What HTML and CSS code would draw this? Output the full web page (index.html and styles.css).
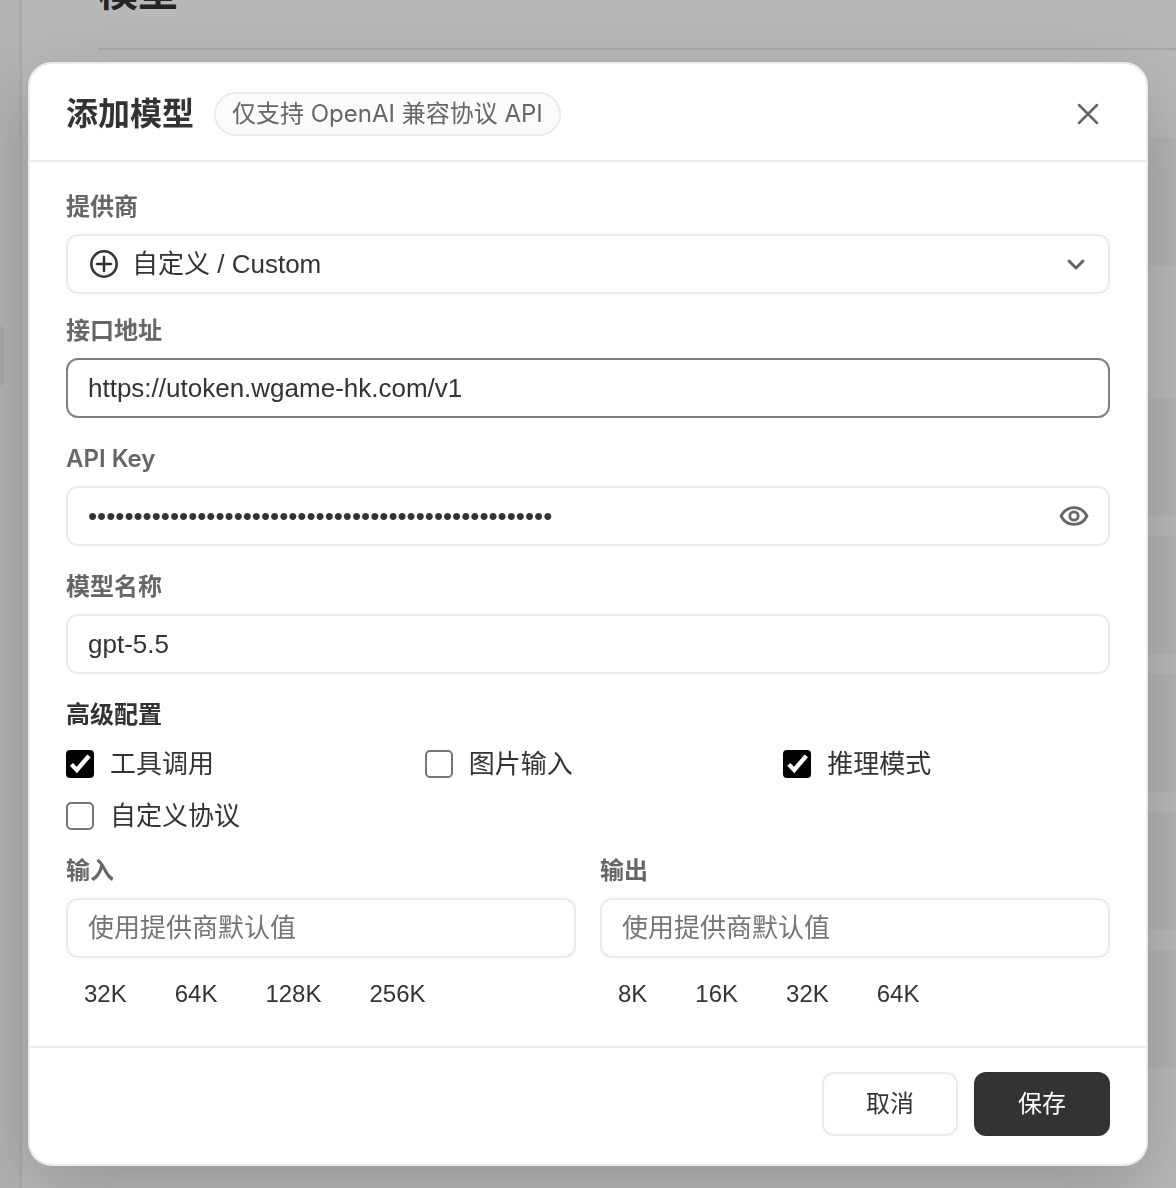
FILE: index.html
```html
<!DOCTYPE html>
<html lang="zh-CN">
<head>
<meta charset="UTF-8" />
<meta name="viewport" content="width=device-width, initial-scale=1.0" />
<title>添加模型</title>
<link rel="stylesheet" href="styles.css">
</head>
<body>

<!-- ------ SETTINGS PAGE (behind the dialog) ------ -->
<div class="app" aria-hidden="true">
  <aside class="sidebar"><span class="sidebar-item"></span></aside>
  <section class="page">
    <header class="page-header"><h1>模型</h1></header>
    <div class="card card-lead"></div>
    <div class="card-list">
      <div class="card"></div>
      <div class="card"></div>
      <div class="card"></div>
      <div class="card"></div>
      <div class="card"></div>
    </div>
  </section>
</div>

<!-- ------ DIALOG ------ -->
<div class="overlay">
  <form class="dialog" role="dialog" aria-modal="true" aria-labelledby="dialogTitle">
    <header class="dialog-header">
      <h2 id="dialogTitle">添加模型</h2>
      <span class="badge">仅支持 OpenAI 兼容协议 API</span>
      <button type="button" class="icon-btn close" aria-label="关闭">
        <svg class="icon" viewBox="0 0 32 32"><path d="M7 7l18 18M25 7l-18 18"/></svg>
      </button>
    </header>

    <div class="dialog-body">
      <div class="field field-provider">
        <label for="provider">提供商</label>
        <div class="control">
          <svg class="icon icon-plus" viewBox="0 0 32 32"><circle cx="16" cy="16" r="12.700"/><path d="M16 9v14M9 16h14"/></svg>
          <select id="provider">
            <option>自定义 / Custom</option>
          </select>
          <svg class="icon icon-chevron" viewBox="0 0 32 32"><path d="M9 13l7 7 7-7"/></svg>
        </div>
      </div>

      <div class="field">
        <label for="baseUrl">接口地址</label>
        <div class="control is-active">
          <input type="text" id="baseUrl" value="https://utoken.wgame-hk.com/v1" spellcheck="false">
        </div>
      </div>

      <div class="field">
        <label for="apiKey">API Key</label>
        <div class="control control-secret">
          <input type="password" id="apiKey" value="sk-000000000000000000000000000000000000000000000000" autocomplete="off">
          <button type="button" class="icon-btn" aria-label="显示 API Key">
            <svg class="icon icon-eye" viewBox="0 0 32 32"><path d="M3 16C6 10.300 10.500 7.600 16 7.600S26 10.300 29 16C26 21.700 21.500 24.400 16 24.400S6 21.700 3 16Z"/><circle cx="16" cy="16" r="4.200"/></svg>
          </button>
        </div>
      </div>

      <div class="field">
        <label for="modelName">模型名称</label>
        <div class="control">
          <input type="text" id="modelName" value="gpt-5.5" spellcheck="false">
        </div>
      </div>

      <fieldset class="advanced">
        <legend>高级配置</legend>
        <div class="checks">
          <label><input type="checkbox" checked> 工具调用</label>
          <label><input type="checkbox"> 图片输入</label>
          <label><input type="checkbox" checked> 推理模式</label>
          <label><input type="checkbox"> 自定义协议</label>
        </div>
      </fieldset>

      <div class="limits">
        <div class="limit">
          <label for="maxInput">输入</label>
          <div class="control">
            <input type="text" id="maxInput" placeholder="使用提供商默认值">
          </div>
          <div class="chips">
            <button type="button">32K</button>
            <button type="button">64K</button>
            <button type="button">128K</button>
            <button type="button">256K</button>
          </div>
        </div>
        <div class="limit">
          <label for="maxOutput">输出</label>
          <div class="control">
            <input type="text" id="maxOutput" placeholder="使用提供商默认值">
          </div>
          <div class="chips">
            <button type="button">8K</button>
            <button type="button">16K</button>
            <button type="button">32K</button>
            <button type="button">64K</button>
          </div>
        </div>
      </div>
    </div>

    <footer class="dialog-footer">
      <button type="button" class="btn">取消</button>
      <button type="submit" class="btn btn-primary">保存</button>
    </footer>
  </form>
</div>

</body>
</html>
```
FILE: styles.css
```css
/* ---------- Root variables ---------- */
:root {
  --text: #333;
  --muted: #666;
  --line: #ebebeb;
  --radius: 12px;
  --font-ui: Inter, "Noto Sans CJK SC", sans-serif;
  --font-control: "Liberation Sans", Arial, "Noto Sans CJK SC", sans-serif;
}

/* ---------- Global styles ---------- */
* { box-sizing: border-box; }

body {
  margin: 0;
  font-family: var(--font-ui);
  font-size: 24px;
  color: var(--text);
}

h1, h2 { margin: 0; font-weight: 600; }

input, select, button {
  font-family: var(--font-control);
  color: inherit;
}

button {
  border: 0;
  padding: 0;
  background: none;
  cursor: pointer;
}

/* ---------- Page behind the dialog ---------- */
.app {
  display: flex;
  height: 100vh;
  overflow: hidden;
}
.sidebar {
  flex: 0 0 22px;
  padding-top: 326px;
  background: #f7f7f7;
  border-right: 2px solid #ebebeb;
}
.sidebar-item {
  display: block;
  width: 4px;
  height: 60px;
  background: #ebebeb;
  border-radius: 0 4px 4px 0;
}
.page {
  flex: 1;
  padding-left: 76px;
}
.page-header {
  display: flex;
  align-items: flex-end;
  height: 50px;
  padding-bottom: 36px;
  border-bottom: 2px solid #e8e8e8;
}
.page-header h1 {
  font-size: 40px;
  line-height: 40px;
}
.card {
  height: 118px;
  background: #f8f8f8;
}
.card-lead {
  height: 128px;
  margin: 88px 0 132px;
}
.card-list {
  display: grid;
  gap: 20px;
}

/* ---------- Overlay + dialog ---------- */
.overlay {
  position: fixed;
  inset: 0;
  padding: 62px 28px 22px;
  background: rgba(0, 0, 0, 0.28);
  overflow: auto;
}
.dialog {
  background: #fff;
  border: 2px solid var(--line);
  border-radius: 24px;
  box-shadow: 0 24px 80px rgba(0, 0, 0, 0.2);
}

.dialog-header {
  display: flex;
  align-items: center;
  gap: 20px;
  padding: 28px 36px 24px;
  border-bottom: 2px solid var(--line);
}
.dialog-header h2 {
  font-size: 32px;
  line-height: 44px;
}
.badge {
  padding: 0 16px;
  border: 2px solid var(--line);
  border-radius: 22px;
  background: #f9fbfc;
  color: var(--muted);
  line-height: 40px;
}

.icon {
  display: block;
  width: 32px;
  height: 32px;
  fill: none;
  stroke: var(--muted);
  stroke-width: 2.5;
  stroke-linecap: round;
  stroke-linejoin: round;
}
.icon-plus { stroke: var(--text); margin-right: 12px; }
.icon-chevron { stroke-width: 3; pointer-events: none; }
.icon-eye { stroke-width: 2.8; }

.icon-btn {
  display: grid;
  place-items: center;
}
.close {
  width: 44px;
  height: 44px;
  margin-left: auto;
}

/* ---------- Form fields ---------- */
.dialog-body { padding: 28px 36px 32px; }

.field { margin-bottom: 24px; }
.field-provider { margin-bottom: 20px; }

.field label,
.limit label {
  display: block;
  margin-bottom: 10px;
  font-weight: 600;
  line-height: 34px;
  color: var(--muted);
}

.control {
  display: flex;
  align-items: center;
  height: 60px;
  padding: 0 16px 0 20px;
  border: 2px solid var(--line);
  border-radius: var(--radius);
}
.control-secret { padding-right: 18px; }
.control.is-active { border-color: #808080; }
.control input,
.control select {
  flex: 1;
  min-width: 0;
  height: 100%;
  padding: 0;
  border: 0;
  outline: 0;
  background: none;
  font-size: 26px;
}
.control select { appearance: none; }
.control input::placeholder { color: #757575; }

/* ----- Advanced options ----- */
.advanced {
  margin: 0 0 20px;
  padding: 0;
  border: 0;
}
.advanced legend {
  padding: 0;
  margin-bottom: 14px;
  font-weight: 600;
  line-height: 34px;
}
.checks {
  display: grid;
  grid-template-columns: repeat(3, 1fr);
  gap: 16px 32px;
}
.checks label {
  display: flex;
  align-items: center;
  gap: 16px;
  font-size: 26px;
  line-height: 36px;
}
.checks input {
  appearance: none;
  flex: none;
  width: 28px;
  height: 28px;
  margin: 0;
  border: 2px solid #767676;
  border-radius: 5px;
}
.checks input:checked {
  border: 0;
  border-radius: 4px;
  background: #000;
}
.checks input:checked::before {
  content: "";
  display: block;
  height: 100%;
  background: #fff;
  clip-path: polygon(14% 56%, 25% 46%, 38% 60%, 76% 16%, 88% 26%, 39% 83%);
}

/* ----- Token limits ----- */
.limits {
  display: grid;
  grid-template-columns: 1fr 1fr;
  gap: 24px;
}
.chips {
  display: flex;
  gap: 12px;
  margin-top: 16px;
}
.chips button {
  height: 40px;
  padding: 0 18px;
  border-radius: 8px;
  font-size: 24px;
}

/* ---------- Footer ---------- */
.dialog-footer {
  display: flex;
  justify-content: flex-end;
  gap: 16px;
  padding: 24px 36px 28px;
  border-top: 2px solid var(--line);
}
.btn {
  height: 64px;
  padding: 0 42px;
  border: 2px solid var(--line);
  border-radius: var(--radius);
  font-family: var(--font-ui);
  font-size: 24px;
  line-height: 36px;
}
.btn-primary {
  border-color: var(--text);
  background: var(--text);
  color: #fff;
}

/* ---------- Small screens ---------- */
@media (max-width: 768px) {
  .dialog-header { flex-wrap: wrap; }
  .checks, .limits { grid-template-columns: 1fr; }
  .chips { flex-wrap: wrap; }
}
```
